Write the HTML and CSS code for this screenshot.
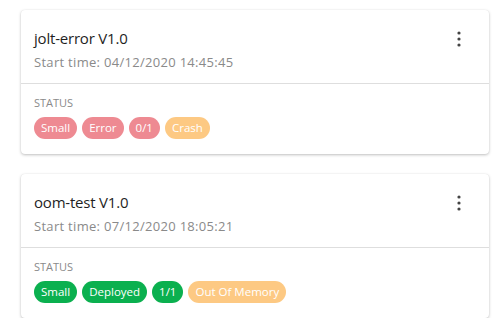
FILE: index.html
```html
<!DOCTYPE html>
<html lang="en">

<head>
  <meta charset="UTF-8">
  <meta name="viewport" content="width=device-width, initial-scale=1.0">
  <title>deployments</title>
  <link rel="stylesheet" href="styles.css">
</head>

<body>
  <ul class="job-list">
    <li class="job-card">
      <div class="job-head">
        <div class="job-info">
          <div class="job-name">jolt-error V1.0</div>
          <div class="job-time">Start time: 04/12/2020 14:45:45</div>
        </div>
        <button class="job-menu" aria-label="menu">
          <svg width="24" height="24" viewBox="0 0 24 24"><circle cx="12" cy="6" r="1.6"/><circle cx="12" cy="12" r="1.6"/><circle cx="12" cy="18" r="1.6"/></svg>
        </button>
      </div>
      <div class="job-status">
        <div class="status-label">STATUS</div>
        <div class="tags">
          <span class="tag red">Small</span>
          <span class="tag red">Error</span>
          <span class="tag red">0/1</span>
          <span class="tag orange">Crash</span>
        </div>
      </div>
    </li>

    <li class="job-card">
      <div class="job-head">
        <div class="job-info">
          <div class="job-name">oom-test V1.0</div>
          <div class="job-time">Start time: 07/12/2020 18:05:21</div>
        </div>
        <button class="job-menu" aria-label="menu">
          <svg width="24" height="24" viewBox="0 0 24 24"><circle cx="12" cy="6" r="1.6"/><circle cx="12" cy="12" r="1.6"/><circle cx="12" cy="18" r="1.6"/></svg>
        </button>
      </div>
      <div class="job-status">
        <div class="status-label">STATUS</div>
        <div class="tags">
          <span class="tag green">Small</span>
          <span class="tag green">Deployed</span>
          <span class="tag green">1/1</span>
          <span class="tag orange">Out Of Memory</span>
        </div>
      </div>
    </li>
  </ul>
</body>

</html>
```

FILE: styles.css
```css
body {
  margin: 0;
  background: #fff;
  font-family: "Open Sans", "Noto Sans", sans-serif;
  color: #222;
}

.job-list {
  display: flex;
  flex-direction: column;
  gap: 20px;
  width: 468px;
  padding: 10px 0 0 21px;
  margin: 0;
  list-style: none;
}

.job-card {
  background: #fff;
  border-radius: 4px;
  box-shadow: 0 1px 3px rgba(0, 0, 0, 0.25), 0 0 1px rgba(0, 0, 0, 0.08);
}

/* 标题区 */
.job-head {
  display: flex;
  justify-content: space-between;
  align-items: flex-start;
  padding: 18px 18px 12px 13px;
  border-bottom: 1px solid #dedede;
}

.job-name {
  font-size: 15px;
  line-height: 20px;
  letter-spacing: -0.2px;
  color: #1f1f1f;
}

.job-time {
  margin-top: 5px;
  font-size: 13px;
  line-height: 18px;
  letter-spacing: 0.3px;
  color: #8a8a8a;
}

.job-menu {
  width: 24px;
  height: 24px;
  margin-top: -1px;
  padding: 0;
  border: 0;
  background: none;
  fill: #444;
}

/* 状态区 */
.job-status {
  padding: 12px 13px 15px;
}

.status-label {
  font-size: 11px;
  line-height: 14px;
  color: #8a8a8a;
}

.tags {
  display: flex;
  gap: 5px;
  margin-top: 7px;
}

.tag {
  height: 22px;
  padding: 0 7px;
  border-radius: 11px;
  font-size: 11.5px;
  line-height: 22px;
  color: #fff;
}

.red {
  background: #ee8a92;
}

.green {
  background: #0bb04f;
}

.orange {
  background: #fdc983;
}
```
